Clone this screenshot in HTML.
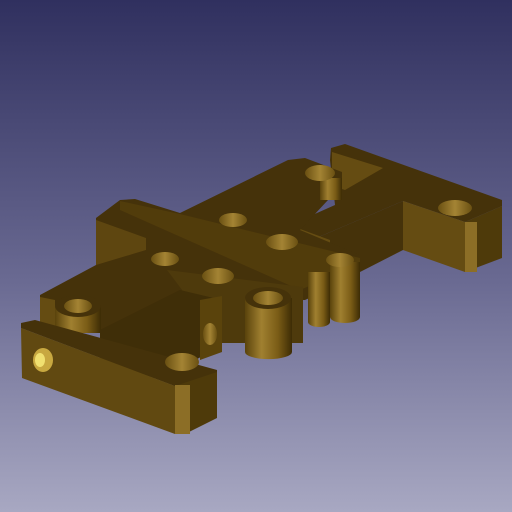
<!DOCTYPE html>
<html><head><meta charset="utf-8"><style>
html,body{margin:0;padding:0;width:512px;height:512px;overflow:hidden}
body{background:linear-gradient(#30305f,#6a6a92 55%,#a8a8c2)}
svg{position:absolute;left:0;top:0}
</style></head><body>
<svg width="512" height="512" viewBox="0 0 512 512">
<defs>
<linearGradient id="cyl" x1="0" x2="1">
<stop offset="0" stop-color="#5a430c"/><stop offset="0.35" stop-color="#a08030"/><stop offset="0.7" stop-color="#7a5c16"/><stop offset="1" stop-color="#3d2c05"/></linearGradient>
<linearGradient id="hole" x1="0" x2="1">
<stop offset="0" stop-color="#6a5012"/><stop offset="0.5" stop-color="#a48434"/><stop offset="1" stop-color="#6a5012"/></linearGradient>
</defs>
<!-- right T piece -->
<polygon points="331,148 345,144 502,200 502,206 465,222 403,201 300,245 290,225 335,205 330,160" fill="#45320a"/>
<polygon points="332,152 383,168 345,190 332,186" fill="#654c12"/>
<polygon points="300,245 403,201 403,250 360,272 300,272" fill="#45320a"/>
<polygon points="292,226 330,240 330,250 292,236" fill="#654c12"/>
<polygon points="403,201 465,222 465,272 403,250" fill="#654c12"/>
<polygon points="465,222 502,206 502,258 465,272" fill="#4e3a0a"/>
<rect x="465" y="222" width="12" height="50" fill="#8c6e26"/>
<!-- middle mass -->
<polygon points="96,218 120,200 135,199 180,213 288,160 305,158 342,172 342,185 300,230 360,255 360,275 305,300 222,300 222,335 150,335 40,330 40,295 96,265" fill="#45320a"/>
<polygon points="120,201 180,214 360,258 360,264 300,290 120,210" fill="#5a430c" opacity="0.6"/>
<polygon points="96,220 146,238 146,250 96,265" fill="#5e4610"/>
<polygon points="167,270 303,287 303,343 222,343" fill="#4e3a0c"/>
<polygon points="40,297 55,300 55,330 40,330" fill="#654c12"/>
<!-- cylinders -->
<rect x="320" y="178" width="22" height="22" fill="url(#cyl)"/>
<path d="M308,272 h22 v50 a11,5 0 0 1 -22,0z" fill="url(#cyl)"/>
<path d="M330,262 h30 v55 a15,6 0 0 1 -30,0z" fill="url(#cyl)"/>
<path d="M245,298 h47 v54 a23,7 0 0 1 -47,0z" fill="url(#cyl)"/>
<ellipse cx="268" cy="298" rx="23" ry="11" fill="#45320a"/>
<path d="M55,305 h46 v28 h-46z" fill="url(#cyl)"/>
<ellipse cx="78" cy="306" rx="23" ry="11" fill="#45320a"/>
<!-- front-center block -->
<polygon points="100,330 180,290 222,300 222,345 160,380 100,360" fill="#3f2e08"/>
<polygon points="200,300 222,296 222,352 200,360" fill="#5a430c"/>
<ellipse cx="210" cy="334" rx="7" ry="11" fill="url(#hole)"/>
<!-- holes -->
<g fill="url(#hole)">
<ellipse cx="320" cy="173" rx="15" ry="8"/>
<ellipse cx="233" cy="220" rx="14" ry="7"/>
<ellipse cx="282" cy="242" rx="16" ry="8"/>
<ellipse cx="165" cy="259" rx="14" ry="7"/>
<ellipse cx="218" cy="276" rx="16" ry="8"/>
<ellipse cx="268" cy="298" rx="15" ry="7"/>
<ellipse cx="340" cy="260" rx="14" ry="7"/>
<ellipse cx="455" cy="208" rx="17" ry="8"/>
<ellipse cx="78" cy="306" rx="14" ry="7"/>
</g>
<!-- front bar -->
<polygon points="21,323 35,320 217,370 217,376 180,388 21,328" fill="#45320a"/>
<polygon points="21,328 175,386 175,434 22,378" fill="#614911"/>
<polygon points="175,386 217,372 217,418 185,434 175,434" fill="#4e3a0a"/>
<rect x="175" y="385" width="15" height="49" fill="#8c6e26"/>
<ellipse cx="182" cy="362" rx="17" ry="9" fill="url(#hole)"/>
<ellipse cx="43" cy="360" rx="10" ry="12" fill="#c8a840"/>
<ellipse cx="40" cy="360" rx="5" ry="7" fill="#f0e070"/>
</svg>
</body></html>
